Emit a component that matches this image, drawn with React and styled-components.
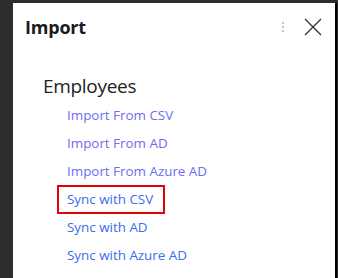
import styled, { createGlobalStyle } from "styled-components";

const Global = createGlobalStyle`
    html, body {
        margin: 0;
        padding: 0;
        background: #2d2d2d;
        width: 338px;
        height: 278px;
        overflow: hidden;
    }
`
const Screen = styled.div`
    display: flex;
    width: 338px;
    height: 278px;
    padding: 3px 0 0 13px;
    box-sizing: border-box;
    font-family: "Open Sans", "Noto Sans", sans-serif;
`
const Panel = styled.div`
    flex: 1;
    background: #fff;
    border-right: 2px solid #000;
    margin-right: 1px;
    display: flex;
    flex-direction: column;
`
const Header = styled.div`
    display: flex;
    align-items: center;
    height: 48px;
    padding: 0 12px 0 12px;
`
const Title = styled.h1`
    flex: 1;
    margin: 0;
    font-size: 18px;
    font-weight: 700;
    color: #1b1b1b;
    letter-spacing: -0.2px;
`
const Dots = styled.div`
    display: flex;
    flex-direction: column;
    gap: 2px;
    margin-right: 19px;
    span {
        width: 2px;
        height: 2px;
        background: #c4c4c4;
    }
`
const CloseButton = styled.button`
    background: none;
    border: none;
    padding: 0;
    width: 20px;
    height: 20px;
    display: flex;
    cursor: pointer;
`
const Body = styled.div`
    padding: 22px 0 0 30px;
`
const Section = styled.h2`
    margin: 0 0 2px;
    font-size: 19px;
    font-weight: 400;
    color: #222;
    letter-spacing: -0.3px;
`
const LinkList = styled.ul`
    list-style: none;
    margin: 0;
    padding: 0 0 0 14px;
    display: flex;
    flex-direction: column;
`
const Item = styled.li`
    height: 28px;
    display: flex;
    align-items: center;
`
const Link = styled.a`
    font-size: 13.4px;
    color: ${p => p.$visited ? "#6e6cf2" : "#3a6df0"};
    text-decoration: none;
    padding: 4px 10px 4px 8px;
    border: 2px solid ${p => p.$active ? "#e60000" : "transparent"};
    line-height: 17px;
`

const links = [
    { label: "Import From CSV", visited: true },
    { label: "Import From AD", visited: true },
    { label: "Import From Azure AD", visited: true },
    { label: "Sync with CSV", active: true },
    { label: "Sync with AD" },
    { label: "Sync with Azure AD" },
]

const App = () => {
    return (
        <Screen>
            <Global />
            <Panel>
                <Header>
                    <Title>Import</Title>
                    <Dots><span /><span /><span /></Dots>
                    <CloseButton aria-label="Close">
                        <svg width="20" height="20" viewBox="0 0 20 20">
                            <path d="M2 2 L18 18 M18 2 L2 18" stroke="#333" strokeWidth="1.3" fill="none" />
                        </svg>
                    </CloseButton>
                </Header>
                <Body>
                    <Section>Employees</Section>
                    <LinkList>
                        {links.map(l => (
                            <Item key={l.label}>
                                <Link href="#" $visited={l.visited} $active={l.active}>{l.label}</Link>
                            </Item>
                        ))}
                    </LinkList>
                </Body>
            </Panel>
        </Screen>
    )
}

export default App;
